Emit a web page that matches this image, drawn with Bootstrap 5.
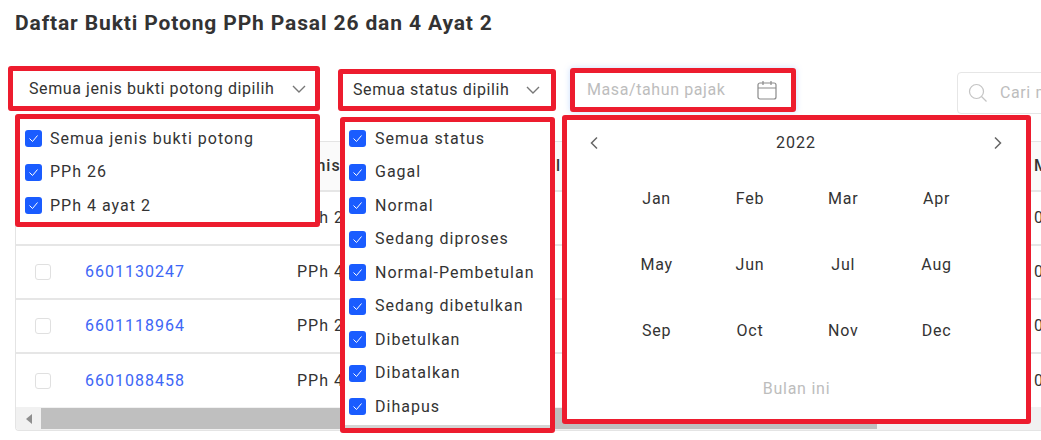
<!DOCTYPE html>
<html lang="id">
<head>
  <meta charset="UTF-8" />
  <meta name="viewport" content="width=device-width, initial-scale=1.0"/>
  <title>Daftar Bukti Potong</title>
  <link href="https://cdn.jsdelivr.net/npm/bootstrap@5.3.0/dist/css/bootstrap.min.css" rel="stylesheet" />
  <style>
    html, body { height: 440px; overflow: hidden; }
    body {
      background: #fff;
      color: #333;
      font-family: Roboto, "Liberation Sans", sans-serif;
      font-size: 16px;
      letter-spacing: .6px;
      position: relative;
    }
    .page-title {
      font-size: 21px;
      font-weight: 700;
      line-height: 24px;
      letter-spacing: .87px;
      margin: 0;
      padding: 11px 0 0 15px;
      color: #333;
    }
    .red-box { border: 5px solid #ed1c2e; border-radius: 3px; background: #fff; }

    .toolbar { height: 107px; padding-left: 8px; flex-wrap: nowrap; width: 1041px; overflow: hidden; }
    .pick { height: 45px; flex: none; }
    .pick-jenis { width: 312px; margin-top: 31px; padding: 0 9px 0 16px; }
    .pick-status { width: 218px; height: 42px; margin: 34px 0 0 18px; padding: 0 11px 0 10px; }
    .pick-masa {
      width: 226px; height: 44px; margin: 33px 0 0 14px; padding: 0 14px 0 12px; color: #bdbdbd;
      box-shadow: 0 0 6px rgba(110, 165, 255, .35);
    }
    .search-box {
      width: 200px; height: 42px; margin: 37px 0 0 161px; padding-left: 10px;
      border: 1px solid #e6e6e6; border-radius: 4px; color: #bdbdbd; flex: none;
    }

    .table-wrap {
      margin-left: 15px; width: 1026px; margin-top: -1px;
      border: 1px solid #e4e4e4; border-right: 0; border-radius: 4px 0 0 4px; overflow: hidden;
    }
    .data-table { width: 1100px; margin: 0; table-layout: fixed; letter-spacing: 1px; }
    .data-table th, .data-table td {
      height: 54px; padding: 0; vertical-align: middle; white-space: nowrap;
      border-bottom: 2px solid #e6e6e6; border-top: 0; color: #333; overflow: hidden;
    }
    .data-table th { height: 49px; background: #fafafa; font-weight: 500; }
    .data-table tr:last-child td { border-bottom: 0; height: 54px; }
    .col-check { width: 69px; }
    .col-nomor { width: 212px; }
    .col-jenis { width: 100px; }
    .col-rest { width: 637px; }
    .col-last { width: 82px; }
    .data-table .th-tanggal { padding-left: 100px; }
    .row-check { width: 16px; height: 16px; display: block; margin-left: 19px; border: 1px solid #e0e0e0; border-radius: 3px; }
    .nomor-link { color: #3d66f6; text-decoration: none; }

    .fake-scroll { height: 23px; background: #f1f1f1; }
    .scroll-arrow { width: 25px; }
    .scroll-thumb { width: 836px; height: 21px; background: #bfbfbf; }

    /* the open dropdowns lie over the table */
    .drop-layer { position: absolute; z-index: 5; }
    .menu-jenis { left: 15px; top: 114px; width: 305px; height: 113px; padding: 3px 0 0 5px; }
    .menu-status {
      left: 340px; top: 117px; width: 215px; height: 316px; padding: 0 0 0 4px;
      box-shadow: inset 0 -3px 0 #d4d4d4;
    }
    .menu-status .cek-row { gap: 9px; }
    .cal-pop { left: 562px; top: 115px; width: 469px; height: 309px; letter-spacing: .75px; }

    .cek-row { height: 33.5px; gap: 8px; letter-spacing: 1px; }
    .cek-row .form-check-input {
      width: 17px; height: 17px; margin: 0; flex: none; border: 0; border-radius: 3px;
      background-color: #1a5cff;
      background-size: 13px 13px;
      background-image: url("data:image/svg+xml,%3csvg xmlns='http://www.w3.org/2000/svg' viewBox='0 0 13 13'%3e%3cpath fill='none' stroke='%23fff' stroke-width='1' d='M2.5 6.5l3 3 5-6'/%3e%3c/svg%3e");
    }

    .cal-head { height: 46px; padding: 0 23px 0 22px; letter-spacing: 1px; }
    .month-grid {
      display: grid; grid-template-columns: repeat(4, 93.3px); grid-auto-rows: 66px;
      padding-left: 43px; text-align: center;
    }
    .month-grid span { line-height: 66px; }
    .this-month { color: #bdbdbd; text-align: center; margin-top: 13px; line-height: 24px; }
  </style>
</head>
<body>
  <h1 class="page-title">Daftar Bukti Potong PPh Pasal 26 dan 4 Ayat 2</h1>

  <div class="toolbar d-flex align-items-start">
    <div class="pick pick-jenis red-box d-flex align-items-center justify-content-between">
      <span>Semua jenis bukti potong dipilih</span>
      <svg width="14" height="8" viewBox="0 0 14 8"><path d="M1 1l6 6 6-6" fill="none" stroke="#777" stroke-width="1.4"/></svg>
    </div>
    <div class="pick pick-status red-box d-flex align-items-center justify-content-between">
      <span>Semua status dipilih</span>
      <svg width="14" height="8" viewBox="0 0 14 8"><path d="M1 1l6 6 6-6" fill="none" stroke="#777" stroke-width="1.4"/></svg>
    </div>
    <div class="pick pick-masa red-box d-flex align-items-center justify-content-between">
      <span>Masa/tahun pajak</span>
      <svg width="20" height="20" viewBox="0 0 20 20" fill="none" stroke="#8a8a8a" stroke-width="1.2"><rect x="1" y="3" width="18" height="16" rx="2"/><path d="M1 8h18M6 1v4M14 1v4"/></svg>
    </div>
    <div class="search-box d-flex align-items-center gap-2">
      <svg width="20" height="20" viewBox="0 0 20 20" fill="none" stroke="#c4c4c4" stroke-width="1.2"><circle cx="8.5" cy="8.5" r="7"/><path d="M13.5 13.5l5 5"/></svg>
      <span class="ms-1">Cari masa</span>
    </div>
  </div>

  <div class="table-wrap">
    <table class="table data-table">
      <colgroup>
        <col class="col-check"><col class="col-nomor"><col class="col-jenis"><col class="col-rest"><col class="col-last">
      </colgroup>
      <thead>
        <tr><th></th><th>Nomor</th><th>Jenis</th><th class="th-tanggal">Tanggal</th><th>Masa</th></tr>
      </thead>
      <tbody>
        <tr><td><span class="row-check"></span></td><td><a class="nomor-link" href="#">6601130248</a></td><td>PPh 26</td><td></td><td>01/2022</td></tr>
        <tr><td><span class="row-check"></span></td><td><a class="nomor-link" href="#">6601130247</a></td><td>PPh 4 ayat 2</td><td></td><td>01/2022</td></tr>
        <tr><td><span class="row-check"></span></td><td><a class="nomor-link" href="#">6601118964</a></td><td>PPh 26</td><td></td><td>01/2022</td></tr>
        <tr><td><span class="row-check"></span></td><td><a class="nomor-link" href="#">6601088458</a></td><td>PPh 4 ayat 2</td><td></td><td>01/2022</td></tr>
      </tbody>
    </table>
    <div class="fake-scroll d-flex align-items-center">
      <div class="scroll-arrow d-flex justify-content-center">
        <svg width="6" height="10" viewBox="0 0 6 10"><path d="M6 0v10L0 5z" fill="#8f8f8f"/></svg>
      </div>
      <div class="scroll-thumb"></div>
    </div>
  </div>

  <div class="drop-layer menu-jenis red-box">
    <div class="cek-row d-flex align-items-center"><input class="form-check-input" type="checkbox" id="j1" checked><label class="form-check-label" for="j1">Semua jenis bukti potong</label></div>
    <div class="cek-row d-flex align-items-center"><input class="form-check-input" type="checkbox" id="j2" checked><label class="form-check-label" for="j2">PPh 26</label></div>
    <div class="cek-row d-flex align-items-center"><input class="form-check-input" type="checkbox" id="j3" checked><label class="form-check-label" for="j3">PPh 4 ayat 2</label></div>
  </div>

  <div class="drop-layer menu-status red-box">
    <div class="cek-row d-flex align-items-center"><input class="form-check-input" type="checkbox" id="s1" checked><label class="form-check-label" for="s1">Semua status</label></div>
    <div class="cek-row d-flex align-items-center"><input class="form-check-input" type="checkbox" id="s2" checked><label class="form-check-label" for="s2">Gagal</label></div>
    <div class="cek-row d-flex align-items-center"><input class="form-check-input" type="checkbox" id="s3" checked><label class="form-check-label" for="s3">Normal</label></div>
    <div class="cek-row d-flex align-items-center"><input class="form-check-input" type="checkbox" id="s4" checked><label class="form-check-label" for="s4">Sedang diproses</label></div>
    <div class="cek-row d-flex align-items-center"><input class="form-check-input" type="checkbox" id="s5" checked><label class="form-check-label" for="s5">Normal-Pembetulan</label></div>
    <div class="cek-row d-flex align-items-center"><input class="form-check-input" type="checkbox" id="s6" checked><label class="form-check-label" for="s6">Sedang dibetulkan</label></div>
    <div class="cek-row d-flex align-items-center"><input class="form-check-input" type="checkbox" id="s7" checked><label class="form-check-label" for="s7">Dibetulkan</label></div>
    <div class="cek-row d-flex align-items-center"><input class="form-check-input" type="checkbox" id="s8" checked><label class="form-check-label" for="s8">Dibatalkan</label></div>
    <div class="cek-row d-flex align-items-center"><input class="form-check-input" type="checkbox" id="s9" checked><label class="form-check-label" for="s9">Dihapus</label></div>
  </div>

  <div class="drop-layer cal-pop red-box">
    <div class="cal-head d-flex align-items-center justify-content-between">
      <svg width="10" height="14" viewBox="0 0 10 14"><path d="M8 1.5L2.5 7 8 12.5" fill="none" stroke="#666" stroke-width="1.5"/></svg>
      <span>2022</span>
      <svg width="10" height="14" viewBox="0 0 10 14"><path d="M2 1.5L7.5 7 2 12.5" fill="none" stroke="#666" stroke-width="1.5"/></svg>
    </div>
    <div class="month-grid">
      <span>Jan</span><span>Feb</span><span>Mar</span><span>Apr</span>
      <span>May</span><span>Jun</span><span>Jul</span><span>Aug</span>
      <span>Sep</span><span>Oct</span><span>Nov</span><span>Dec</span>
    </div>
    <div class="this-month">Bulan ini</div>
  </div>

  <script src="https://cdn.jsdelivr.net/npm/bootstrap@5.3.0/dist/js/bootstrap.bundle.min.js"></script>
</body>
</html>
